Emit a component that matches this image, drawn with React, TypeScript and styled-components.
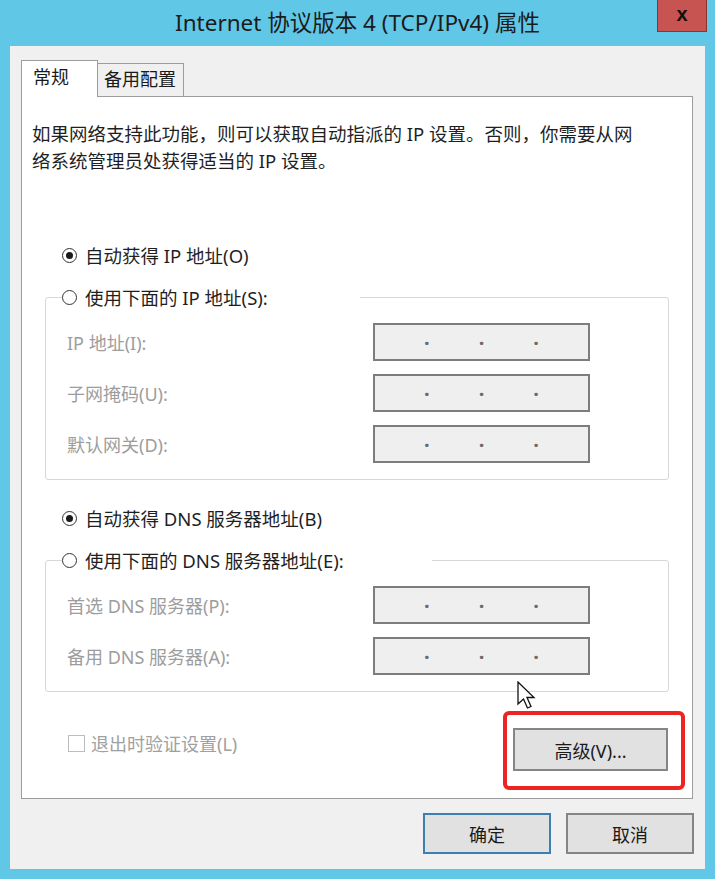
import styled, { createGlobalStyle } from 'styled-components';

const GlobalStyle = createGlobalStyle`
  html, body {
    margin: 0;
    padding: 0;
  }
  body {
    background: #61c7e7;
    font-family: "Noto Sans", "Noto Sans CJK SC", sans-serif;
    color: #1f1f1f;
  }
`;

const Frame = styled.div`
  position: relative;
  width: 715px;
  height: 879px;
  display: flex;
  flex-direction: column;
  background: #61c7e7;
  overflow: hidden;
`;

const TitleBar = styled.div`
  flex: none;
  height: 46px;
  display: grid;
  grid-template-columns: 1fr auto 1fr;
`;

const Title = styled.div`
  font-size: 22.5px;
  line-height: 45px;
  color: #1b1b1b;
  white-space: nowrap;
`;

const CloseButton = styled.div`
  justify-self: end;
  margin-right: 8px;
  width: 50px;
  height: 32px;
  box-sizing: border-box;
  background: #c75450;
  border: 1px solid #8a3430;
  border-top: none;
  display: flex;
  align-items: center;
  justify-content: center;
  font-family: "Liberation Sans", sans-serif;
  font-weight: 700;
  font-size: 20px;
  color: #111;
  padding-bottom: 3px;
`;

const Client = styled.div`
  flex: 1;
  margin: 0 10px 10px;
  background: #f0f0f0;
  padding: 14px 12px 15px 11px;
  display: flex;
  flex-direction: column;
`;

const TabStrip = styled.div`
  display: flex;
  align-items: flex-end;
  height: 37px;
  margin-bottom: -1px;
  position: relative;
  z-index: 1;
`;

const Tab = styled.div<{ $active?: boolean }>`
  box-sizing: border-box;
  height: ${(p) => (p.$active ? '37px' : '33px')};
  margin-bottom: ${(p) => (p.$active ? '0' : '1px')};
  padding-left: ${(p) => (p.$active ? '11px' : '6px')};
  width: ${(p) => (p.$active ? '77px' : '87px')};
  margin-left: ${(p) => (p.$active ? '0' : '-1px')};
  background: ${(p) => (p.$active ? '#fff' : '#f0f0f0')};
  border: 1px solid #9c9c9c;
  border-bottom: none;
  font-size: 18px;
  line-height: ${(p) => (p.$active ? '32px' : '31px')};
  color: #1a1a1a;
`;

const Panel = styled.div`
  flex: 1;
  background: #fff;
  border: 1px solid #9c9c9c;
  display: flex;
  flex-direction: column;
  padding: 23px 0 8px;
  font-size: 18.5px;
`;

const Description = styled.p`
  margin: 0;
  padding-left: 10px;
  line-height: 27px;
  white-space: nowrap;
`;

const RadioRow = styled.div<{ $gap: number }>`
  display: flex;
  align-items: center;
  gap: 8px;
  height: 28px;
  margin-top: ${(p) => p.$gap}px;
  padding-left: 40px;
  white-space: nowrap;
`;

const RadioMark = styled.span<{ $checked?: boolean }>`
  position: relative;
  flex: none;
  width: 15px;
  height: 15px;
  box-sizing: border-box;
  border: 1px solid #333;
  border-radius: 50%;
  background: #fff;
  &::after {
    content: '';
    display: ${(p) => (p.$checked ? 'block' : 'none')};
    position: absolute;
    left: 3px;
    top: 3px;
    width: 7px;
    height: 7px;
    border-radius: 50%;
    background: #1a1a1a;
  }
`;

const GroupBox = styled.fieldset`
  margin: 14px 23px 0;
  padding: 12px 21px 16px;
  border: 1px solid #d8d8d8;
  border-radius: 3px;
  min-width: 0;
`;

const Legend = styled.legend<{ $width: number }>`
  margin-left: -5px;
  padding: 0;
  width: ${(p) => p.$width}px;
  height: 28px;
  display: flex;
  align-items: center;
  gap: 8px;
  white-space: nowrap;
`;

const FieldGrid = styled.div`
  display: grid;
  grid-template-columns: 306px 217px;
  row-gap: 13px;
  align-items: center;
`;

const FieldLabel = styled.span`
  color: #9d9d9d;
  font-size: 18px;
  white-space: nowrap;
`;

const AddressBox = styled.div`
  box-sizing: border-box;
  height: 38px;
  border: 2px solid #7d7d7d;
  background: #efefef;
  display: flex;
  justify-content: space-evenly;
  align-items: center;
  color: #6a6a72;
  font-size: 20px;
  font-weight: 700;
  line-height: 1;
  padding-bottom: 8px;
`;

const Footer = styled.div`
  margin-top: auto;
  display: flex;
  justify-content: space-between;
  align-items: flex-start;
  padding: 0 7px 0 46px;
`;

const CheckLabel = styled.div`
  margin-top: 18px;
  display: flex;
  align-items: center;
  gap: 6px;
  height: 28px;
  color: #a0a0a0;
  font-size: 18px;
  white-space: nowrap;
`;

const CheckMark = styled.span`
  width: 17px;
  height: 17px;
  box-sizing: border-box;
  border: 1px solid #bdbdbd;
  background: #fff;
`;

const Highlight = styled.div`
  border: 4px solid #ec2424;
  border-radius: 6px;
  padding: 13px 13px 15px 6px;
`;

const Button = styled.div<{ $width: number; $height: number; $default?: boolean }>`
  box-sizing: border-box;
  width: ${(p) => p.$width}px;
  height: ${(p) => p.$height}px;
  background: #e1e1e1;
  border: 2px solid ${(p) => (p.$default ? '#3c7fb1' : '#858585')};
  display: flex;
  align-items: center;
  justify-content: center;
  font-size: 18px;
  color: #1a1a1a;
`;

const DialogButtons = styled.div`
  display: flex;
  justify-content: flex-end;
  gap: 15px;
  margin-top: 14px;
  margin-right: -1px;
`;

const Cursor = styled.svg`
  position: absolute;
  left: 517px;
  top: 681px;
`;

const AddressField = () => (
  <AddressBox>
    <span>.</span>
    <span>.</span>
    <span>.</span>
  </AddressBox>
);

function App() {
  return (
    <>
      <GlobalStyle />
      <Frame>
        <TitleBar>
          <span />
          <Title>Internet 协议版本 4 (TCP/IPv4) 属性</Title>
          <CloseButton>x</CloseButton>
        </TitleBar>
        <Client>
          <TabStrip>
            <Tab $active>常规</Tab>
            <Tab>备用配置</Tab>
          </TabStrip>
          <Panel>
            <Description>
              如果网络支持此功能，则可以获取自动指派的 IP 设置。否则，你需要从网
              <br />
              络系统管理员处获得适当的 IP 设置。
            </Description>

            <RadioRow $gap={67}>
              <RadioMark $checked />
              自动获得 IP 地址(O)
            </RadioRow>
            <GroupBox>
              <Legend $width={298}>
                <RadioMark />
                使用下面的 IP 地址(S):
              </Legend>
              <FieldGrid>
                <FieldLabel>IP 地址(I):</FieldLabel>
                <AddressField />
                <FieldLabel>子网掩码(U):</FieldLabel>
                <AddressField />
                <FieldLabel>默认网关(D):</FieldLabel>
                <AddressField />
              </FieldGrid>
            </GroupBox>

            <RadioRow $gap={24}>
              <RadioMark $checked />
              自动获得 DNS 服务器地址(B)
            </RadioRow>
            <GroupBox>
              <Legend $width={370}>
                <RadioMark />
                使用下面的 DNS 服务器地址(E):
              </Legend>
              <FieldGrid>
                <FieldLabel>首选 DNS 服务器(P):</FieldLabel>
                <AddressField />
                <FieldLabel>备用 DNS 服务器(A):</FieldLabel>
                <AddressField />
              </FieldGrid>
            </GroupBox>

            <Footer>
              <CheckLabel>
                <CheckMark />
                退出时验证设置(L)
              </CheckLabel>
              <Highlight>
                <Button $width={155} $height={43}>
                  高级(V)...
                </Button>
              </Highlight>
            </Footer>
          </Panel>
          <DialogButtons>
            <Button $width={128} $height={41} $default>
              确定
            </Button>
            <Button $width={128} $height={41}>
              取消
            </Button>
          </DialogButtons>
        </Client>
        <Cursor width="20" height="30" viewBox="0 0 20 30">
          <path
            d="M1 1 L1 23 L6.5 18 L10.5 27 L14 25.5 L10 16.5 L17 16.5 Z"
            fill="#fff"
            stroke="#111"
            strokeWidth="1.3"
            strokeLinejoin="miter"
          />
        </Cursor>
      </Frame>
    </>
  );
}

export default App;
